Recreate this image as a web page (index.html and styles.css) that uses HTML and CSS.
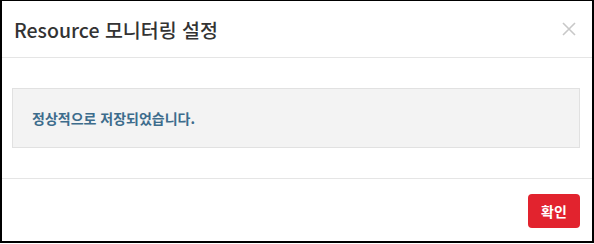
FILE: index.html
```html
<!DOCTYPE html>
<html lang="ko">
<head>
<meta charset="utf-8">
<link rel="stylesheet" href="styles.css">
</head>
<body>
<div class="modal">
  <div class="modal-header">
    <h4 class="modal-title">Resource 모니터링 설정</h4>
    <button class="close" aria-label="닫기">
      <svg width="14" height="14" viewBox="0 0 14 14"><path d="M1 1L13 13M13 1L1 13" stroke="#c8c8c8" stroke-width="1.6" fill="none"/></svg>
    </button>
  </div>
  <div class="modal-body">
    <div class="alert">정상적으로 저장되었습니다.</div>
  </div>
  <div class="modal-footer">
    <button class="btn-confirm">확인</button>
  </div>
</div>
</body>
</html>
```
FILE: styles.css
```css
html, body {
  margin: 0;
  padding: 0;
  background: #fff;
}
body {
  font-family: "Noto Sans CJK KR", "Noto Sans", sans-serif;
}
.modal {
  box-sizing: border-box;
  width: 594px;
  height: 243px;
  border-style: solid;
  border-color: #000;
  border-width: 1px 2px 2px 2px;
  background: #fff;
  display: flex;
  flex-direction: column;
}
.modal-header {
  height: 56px;
  border-bottom: 1px solid #e5e5e5;
  display: flex;
  align-items: center;
  justify-content: space-between;
  padding: 0 16px 0 12px;
}
.modal-title {
  margin: 0;
  font-size: 19.5px;
  font-weight: 500;
  color: #333;
  line-height: 1;
  padding-top: 1px;
}
.close {
  border: 0;
  background: none;
  padding: 0;
  width: 14px;
  height: 14px;
  display: flex;
}
.modal-body {
  padding: 30px 12px 30px 10px;
  border-bottom: 1px solid #e5e5e5;
}
.alert {
  box-sizing: border-box;
  height: 60px;
  background: #f3f3f3;
  border: 1px solid #e1e1e1;
  display: flex;
  align-items: center;
  padding-left: 19px;
  font-size: 14px;
  font-weight: 700;
  color: #3d6c8c;
}
.modal-footer {
  flex: 1;
  display: flex;
  justify-content: flex-end;
  align-items: flex-start;
  padding: 15px 12px 0 0;
}
.btn-confirm {
  width: 52px;
  height: 34px;
  border: 0;
  border-radius: 4px;
  background: #e2232e;
  color: #fff;
  font-family: "Noto Sans CJK KR", sans-serif;
  font-size: 14px;
  font-weight: 700;
  padding: 0;
}
```
